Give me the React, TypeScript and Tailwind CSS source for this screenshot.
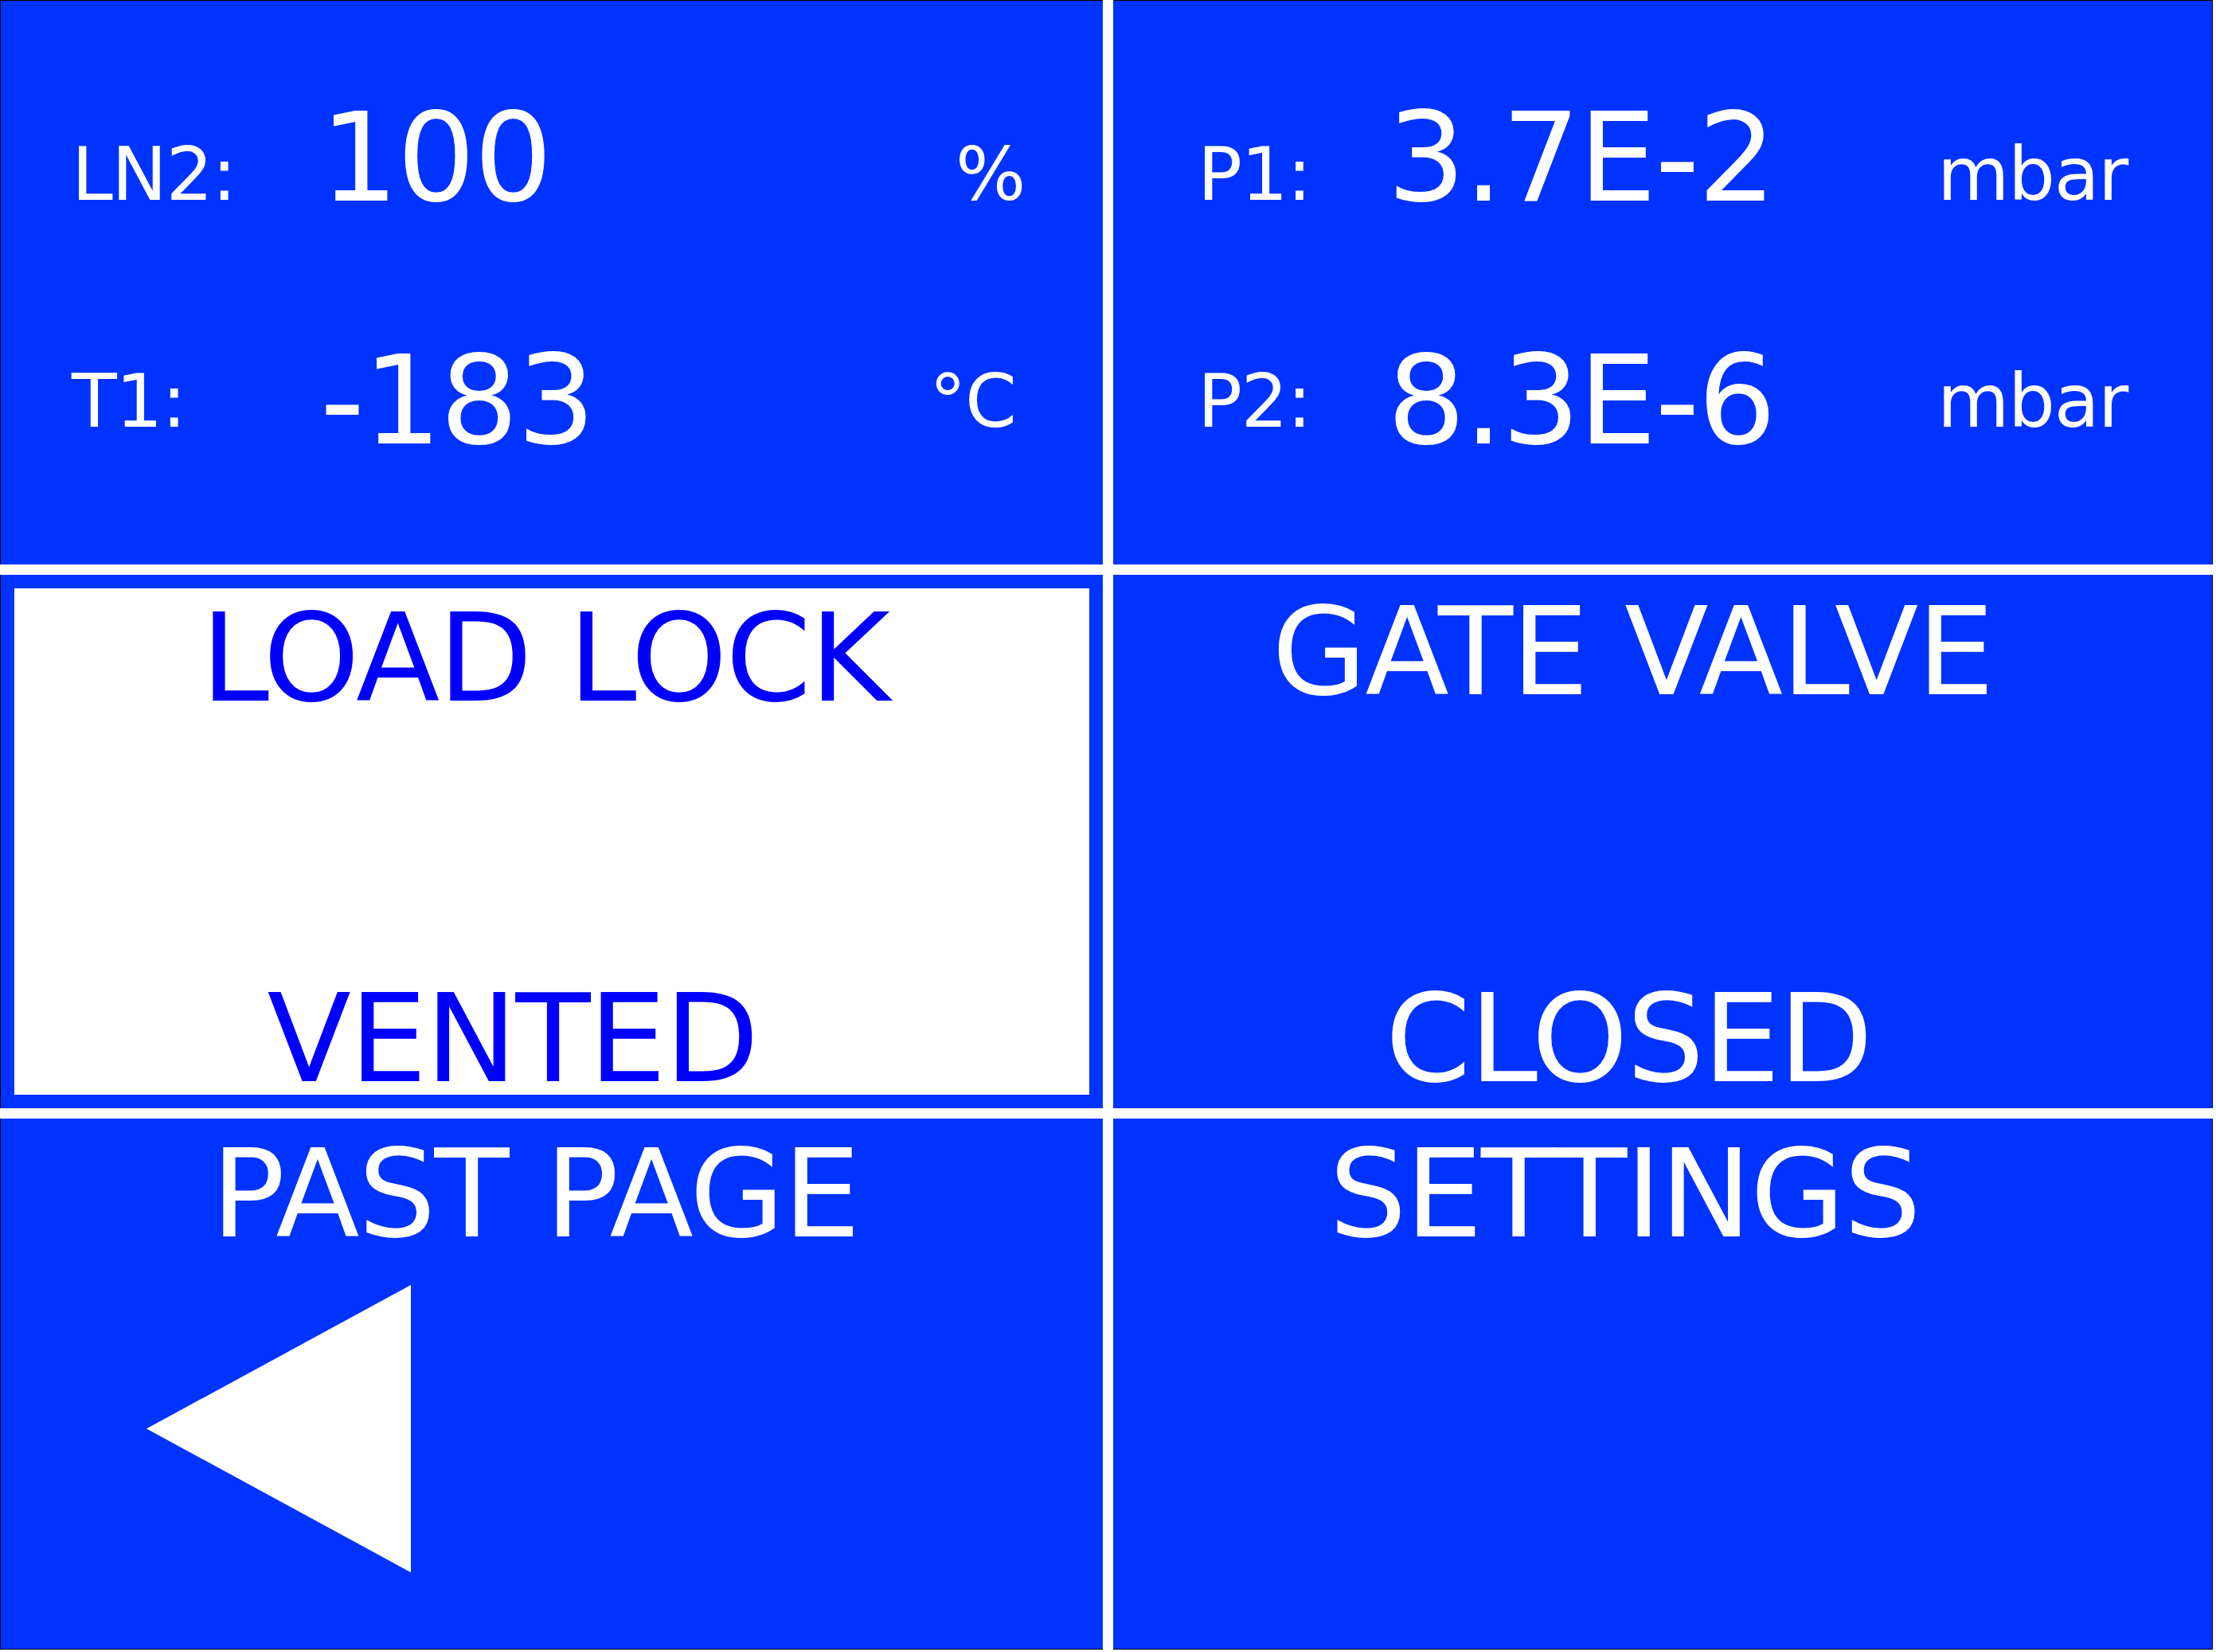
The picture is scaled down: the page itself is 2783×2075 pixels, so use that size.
const PANEL = 'bg-[#0033ff] text-white border-black'

const ReadingRow = ({
  label,
  value,
  unit,
  labelW,
  valueW,
  labelTop,
  valueTop,
  unitClass,
}: {
  label: string
  value: string
  unit: string
  labelW: string
  valueW: string
  labelTop: string
  valueTop: string
  unitClass: string
}) => (
  <div className="flex items-start whitespace-nowrap">
    <span className={`${labelW} ${labelTop} text-[93px] leading-none tracking-[-1.5px]`}>{label}</span>
    <span className={`${valueW} ${valueTop} text-[155px] leading-none tracking-[-2px]`}>{value}</span>
    <span className={`${unitClass} ${labelTop} text-[93px] leading-none tracking-[-1.5px]`}>{unit}</span>
  </div>
)

const App = () => {
  return (
    <div className="w-[2783px] h-[2075px] bg-white font-['DejaVu_Sans',sans-serif]">
      <div className="grid grid-cols-[1385px_1381px] grid-rows-[709px_670px_667px] gap-[13px] w-[2779px]">
        {/* LN2 / T1 */}
        <div className={`${PANEL} border-t border-l pl-[89px] flex flex-col`}>
          <div className="h-[399px]">
            <ReadingRow
              label="LN2:"
              value="100"
              unit="%"
              labelW="w-[312px]"
              valueW="w-[765px]"
              labelTop="mt-[172px]"
              valueTop="mt-[120px]"
              unitClass="ml-[33px]"
            />
          </div>
          <ReadingRow
            label="T1:"
            value="-183"
            unit="°C"
            labelW="w-[312px]"
            valueW="w-[765px]"
            labelTop="mt-[58px]"
            valueTop="mt-[26px]"
            unitClass="ml-0"
          />
        </div>

        {/* P1 / P2 */}
        <div className={`${PANEL} border-t border-r pl-[106px] flex flex-col`}>
          <div className="h-[399px]">
            <ReadingRow
              label="P1:"
              value="3.7E-2"
              unit="mbar"
              labelW="w-[238px]"
              valueW="w-[691px]"
              labelTop="mt-[172px]"
              valueTop="mt-[120px]"
              unitClass="ml-0"
            />
          </div>
          <ReadingRow
            label="P2:"
            value="8.3E-6"
            unit="mbar"
            labelW="w-[238px]"
            valueW="w-[691px]"
            labelTop="mt-[58px]"
            valueTop="mt-[26px]"
            unitClass="ml-0"
          />
        </div>

        {/* load lock */}
        <div className={`${PANEL} border-l p-[17px]`}>
          <div className="bg-white h-full flex flex-col items-center text-[#0000ff] text-[154px] leading-none tracking-[-2px] whitespace-nowrap">
            <span className="mt-[11px] pr-[18px]">LOAD LOCK</span>
            <span className="mt-[324px] pr-[99px]">VENTED</span>
          </div>
        </div>

        {/* gate valve */}
        <div className={`${PANEL} border-r flex flex-col items-center text-[154px] leading-none tracking-[-2px] whitespace-nowrap`}>
          <span className="mt-[20px] pr-[76px]">GATE VALVE</span>
          <span className="mt-[332px] pr-[86px]">CLOSED</span>
        </div>

        {/* past page */}
        <div className={`${PANEL} border-l border-b flex flex-col items-center whitespace-nowrap`}>
          <span className="mt-[18px] pr-[42px] text-[154px] leading-none tracking-[-2px]">PAST PAGE</span>
          <svg className="self-start ml-[183px] mt-[37px]" width="332" height="361" viewBox="0 0 332 361">
            <polygon points="0,180.5 332,0 332,361" fill="#ffffff" />
          </svg>
        </div>

        {/* settings */}
        <div className={`${PANEL} border-r border-b flex flex-col items-center whitespace-nowrap`}>
          <span className="mt-[18px] pr-[96px] text-[154px] leading-none tracking-[-2px]">SETTINGS</span>
        </div>
      </div>
    </div>
  )
}

export default App
